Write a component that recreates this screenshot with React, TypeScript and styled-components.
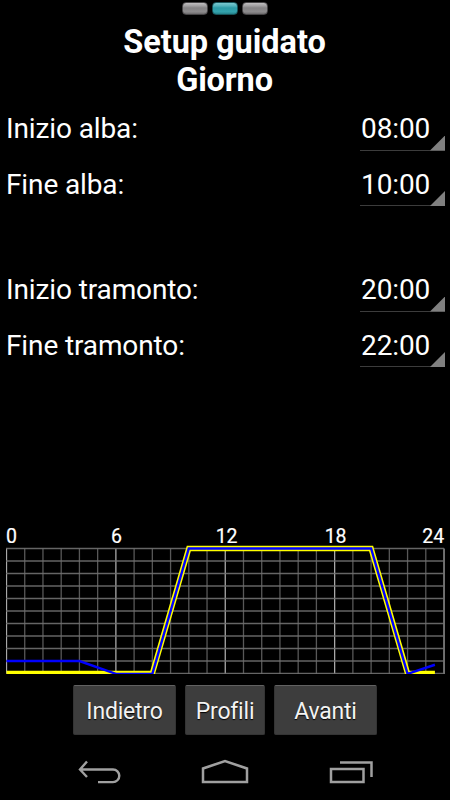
import React from "react";
import styled, { createGlobalStyle } from "styled-components";

const GlobalStyle = createGlobalStyle`
  body { margin: 0; background: #000; }
`;

const Screen = styled.div`
  width: 450px;
  height: 800px;
  overflow: hidden;
  display: flex;
  flex-direction: column;
  background: #000;
  color: #fff;
  font-family: Roboto, "Liberation Sans", sans-serif;
`;

const Pager = styled.div`
  height: 23px;
  padding-top: 2px;
  box-sizing: border-box;
  display: flex;
  justify-content: center;
  gap: 4px;
`;

const PageMark = styled.span<{ $active?: boolean }>`
  width: 26px;
  height: 13px;
  box-sizing: border-box;
  border-radius: 4px;
  border: 1px solid ${(p) => (p.$active ? "#17545a" : "#464446")};
  background: ${(p) =>
    p.$active
      ? "linear-gradient(#7cc8cf 0, #55b4bd 25%, #2c9ba6 45%, #34a3ad 80%, #238089 100%)"
      : "linear-gradient(#c0bec0 0, #a3a1a3 25%, #858385 45%, #8d8b8d 80%, #6b696b 100%)"};
`;

const Title = styled.h1`
  margin: 0;
  height: 78px;
  padding-right: 1px;
  font-size: 32.5px;
  line-height: 38px;
  font-weight: 700;
  text-align: center;
`;

const Line = styled.span<{ $spacing: number }>`
  display: block;
  letter-spacing: ${(p) => p.$spacing}px;
`;

const Group = styled.section`
  height: 161px;
  flex: none;
`;

const Row = styled.div`
  height: 55.5px;
  padding: 0 5px 0 6px;
  display: flex;
  justify-content: space-between;
`;

const Label = styled.span`
  font-size: 28px;
  line-height: 55px;
  letter-spacing: -0.12px;
  white-space: nowrap;
`;

const Spinner = styled.button`
  position: relative;
  width: 85px;
  height: 49.5px;
  box-sizing: border-box;
  padding: 5px 0 0 1px;
  border: 0;
  border-bottom: 1px solid #3c3c3c;
  background: none;
  color: #fff;
  font: 28px/45px Roboto, sans-serif;
  letter-spacing: -0.1px;
  text-align: left;

  &::after {
    content: "";
    position: absolute;
    right: 0;
    bottom: -1px;
    width: 15px;
    height: 15px;
    background: #808080;
    clip-path: polygon(100% 0, 100% 100%, 0 100%);
  }
`;

const ChartPanel = styled.div`
  margin-top: 100px;
  padding-left: 6px;
  flex: none;
`;

const Hours = styled.div`
  width: 438px;
  height: 22px;
  box-sizing: border-box;
  padding-top: 3px;
  display: grid;
  grid-template-columns: 55px 111px 109px 109px 54px;
  font-size: 19.5px;
  line-height: 22px;
  letter-spacing: -0.1px;
  text-align: center;
  -webkit-text-stroke: 0.2px #fff;
`;

const Hour = styled.span<{ $align?: string }>`
  text-align: ${(p) => p.$align ?? "center"};
`;

const Plot = styled.svg`
  display: block;
`;

const Actions = styled.div`
  margin-top: 11px;
  display: flex;
  justify-content: center;
  gap: 9px;
`;

const Action = styled.button<{ $width: number }>`
  width: ${(p) => p.$width}px;
  height: 50px;
  padding: 3px 0 0;
  border: 1px solid #343434;
  border-top-color: #626262;
  border-radius: 2px;
  background: #3d3d3d;
  color: #f3f3f3;
  font: 23px/46px Roboto, sans-serif;
  letter-spacing: -0.2px;
  text-shadow: 0 1px 1px #000;
  white-space: nowrap;
`;

const NavBar = styled.nav`
  height: 56px;
  margin-top: auto;
  padding: 0 77px 0 77px;
  display: flex;
  align-items: center;
  justify-content: space-between;
`;

const HOUR = 18.23;
const TOP = 3.5;
const STEP = 12.5;

const toPoints = (data: number[][]) =>
  data.map(([h, v]) => `${0.5 + h * HOUR},${TOP + (10 - v / 10) * STEP}`).join(" ");

const yellow = toPoints([[0, 0], [8, 0], [10, 100], [20, 100], [22, 0], [23.5, 0]]);
const blue = toPoints([[0, 10], [4, 10], [6, -0.3], [8, -0.3], [10, 100], [20, 100], [22, -0.3], [23.5, 7]]);

const vertical = Array.from({ length: 25 }, (_, i) => i);
const horizontal = Array.from({ length: 11 }, (_, i) => i);

function Chart() {
  return (
    <Plot width="440" height="129" viewBox="0 0 440 129">
      {vertical.map((i) => (
        <line
          key={i}
          x1={0.5 + i * HOUR}
          x2={0.5 + i * HOUR}
          y1={TOP}
          y2="129"
          stroke={i % 6 === 0 ? "#a8a8a8" : "#585858"}
          strokeWidth="1.3"
        />
      ))}
      {horizontal.map((i) => (
        <line key={i} x1="0" x2="438" y1={TOP + i * STEP} y2={TOP + i * STEP} stroke="#707070" strokeOpacity="0.9" strokeWidth="1.3" />
      ))}
      <polyline points={yellow} fill="none" stroke="#ff0" strokeWidth="5.4" />
      <polyline points={blue} fill="none" stroke="#00f" strokeWidth="2.4" />
    </Plot>
  );
}

function SettingRow({ label, value }: { label: string; value: string }) {
  return (
    <Row>
      <Label>{label}</Label>
      <Spinner>{value}</Spinner>
    </Row>
  );
}

export default function App() {
  return (
    <Screen>
      <GlobalStyle />
      <Pager>
        <PageMark />
        <PageMark $active />
        <PageMark />
      </Pager>
      <Title>
        <Line $spacing={-0.05}>Setup guidato</Line>
        <Line $spacing={-0.15}>Giorno</Line>
      </Title>
      <Group>
        <SettingRow label="Inizio alba:" value="08:00" />
        <SettingRow label="Fine alba:" value="10:00" />
      </Group>
      <Group>
        <SettingRow label="Inizio tramonto:" value="20:00" />
        <SettingRow label="Fine tramonto:" value="22:00" />
      </Group>
      <ChartPanel>
        <Hours>
          <Hour $align="left">0</Hour>
          <Hour>6</Hour>
          <Hour>12</Hour>
          <Hour>18</Hour>
          <Hour $align="right">24</Hour>
        </Hours>
        <Chart />
      </ChartPanel>
      <Actions>
        <Action $width={103}>Indietro</Action>
        <Action $width={80}>Profili</Action>
        <Action $width={103}>Avanti</Action>
      </Actions>
      <NavBar>
        <svg width="44" height="26" viewBox="0 0 44 26" fill="none" stroke="#a0a0a0" strokeWidth="2.4">
          <path d="M10 2.5 3 10.5 10 18M3.5 10.5H36a6.3 6.3 0 0 1 0 12.6H21" />
        </svg>
        <svg width="48" height="26" viewBox="0 0 48 26" fill="none" stroke="#a0a0a0" strokeWidth="2.5">
          <path d="M2 23V9.5L24 2 46 9.5V23Z" />
        </svg>
        <svg width="44" height="26" viewBox="0 0 44 26" fill="none" stroke="#a0a0a0" strokeWidth="2.5">
          <path d="M2 10H34.5V23H2ZM11 3.5H42.5V18" />
        </svg>
      </NavBar>
    </Screen>
  );
}
